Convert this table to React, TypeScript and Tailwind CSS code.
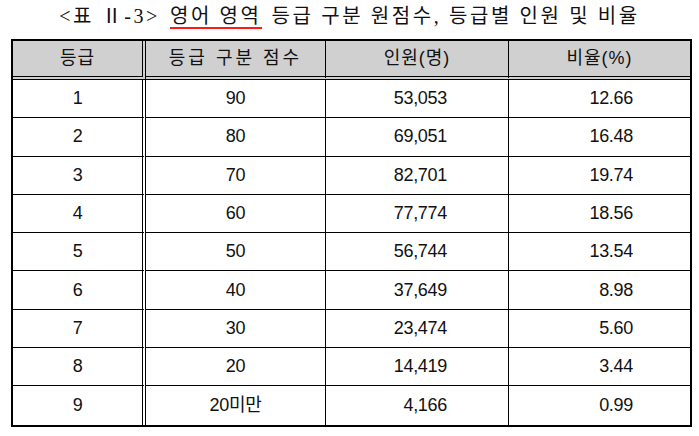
const rows = [
  ["1", "90", "53,053", "12.66"],
  ["2", "80", "69,051", "16.48"],
  ["3", "70", "82,701", "19.74"],
  ["4", "60", "77,774", "18.56"],
  ["5", "50", "56,744", "13.54"],
  ["6", "40", "37,649", "8.98"],
  ["7", "30", "23,474", "5.60"],
  ["8", "20", "14,419", "3.44"],
  ["9", "20미만", "4,166", "0.99"],
];

const cellFont = { fontFamily: '"Liberation Sans", "Noto Sans CJK KR", sans-serif' };

export default function App() {
  return (
    <div className="w-[699px] h-[436px] bg-white text-[#111]">
      <div
        className="flex justify-center pt-[4px] h-[39px] text-[20px] leading-[24px] tracking-[2.6px]"
        style={{ fontFamily: '"Liberation Serif", "Noto Sans CJK KR", serif' }}
      >
        <span>&lt;표 Ⅱ-3&gt;</span>
        <span className="ml-[10px] border-b-2 border-[#ff1a1a] h-[25px]">영어 영역</span>
        <span className="ml-[10px]">등급 구분 원점수, 등급별 인원 및 비율</span>
      </div>

      <div className="ml-[11px] w-[681px] border-2 border-black" style={cellFont}>
        <div className="grid grid-cols-[133px_180px_183px_181px] text-[18px] tracking-[1px]">
          <div className="h-[39px] bg-[#d0d0d0] border-b-4 border-r-4 border-double border-black flex items-center justify-center">등급</div>
          <div className="h-[39px] bg-[#d0d0d0] border-b-4 border-double border-r border-black flex items-center justify-center">
            <span className="tracking-[3px]">등급 구분 점수</span>
          </div>
          <div className="h-[39px] bg-[#d0d0d0] border-b-4 border-double border-r border-black flex items-center justify-center">인원(명)</div>
          <div className="h-[39px] bg-[#d0d0d0] border-b-4 border-double border-black flex items-center justify-center">비율(%)</div>
        </div>
        {rows.map((r, i) => {
          const last = i === rows.length - 1;
          const b = last ? "" : "border-b";
          return (
            <div key={r[0]} className="grid grid-cols-[133px_180px_183px_181px] text-[18px] tracking-[-0.3px]">
              <div className={`h-[38.3px] ${b} border-r-4 border-double border-black flex items-center justify-center`}>{r[0]}</div>
              <div className={`h-[38.3px] ${b} border-r border-black flex items-center justify-center`}>{r[1]}</div>
              <div className={`h-[38.3px] ${b} border-r border-black flex items-center justify-end pr-[61px]`}>{r[2]}</div>
              <div className={`h-[38.3px] ${b} border-black flex items-center justify-end pr-[57px]`}>{r[3]}</div>
            </div>
          );
        })}
      </div>
    </div>
  );
}
